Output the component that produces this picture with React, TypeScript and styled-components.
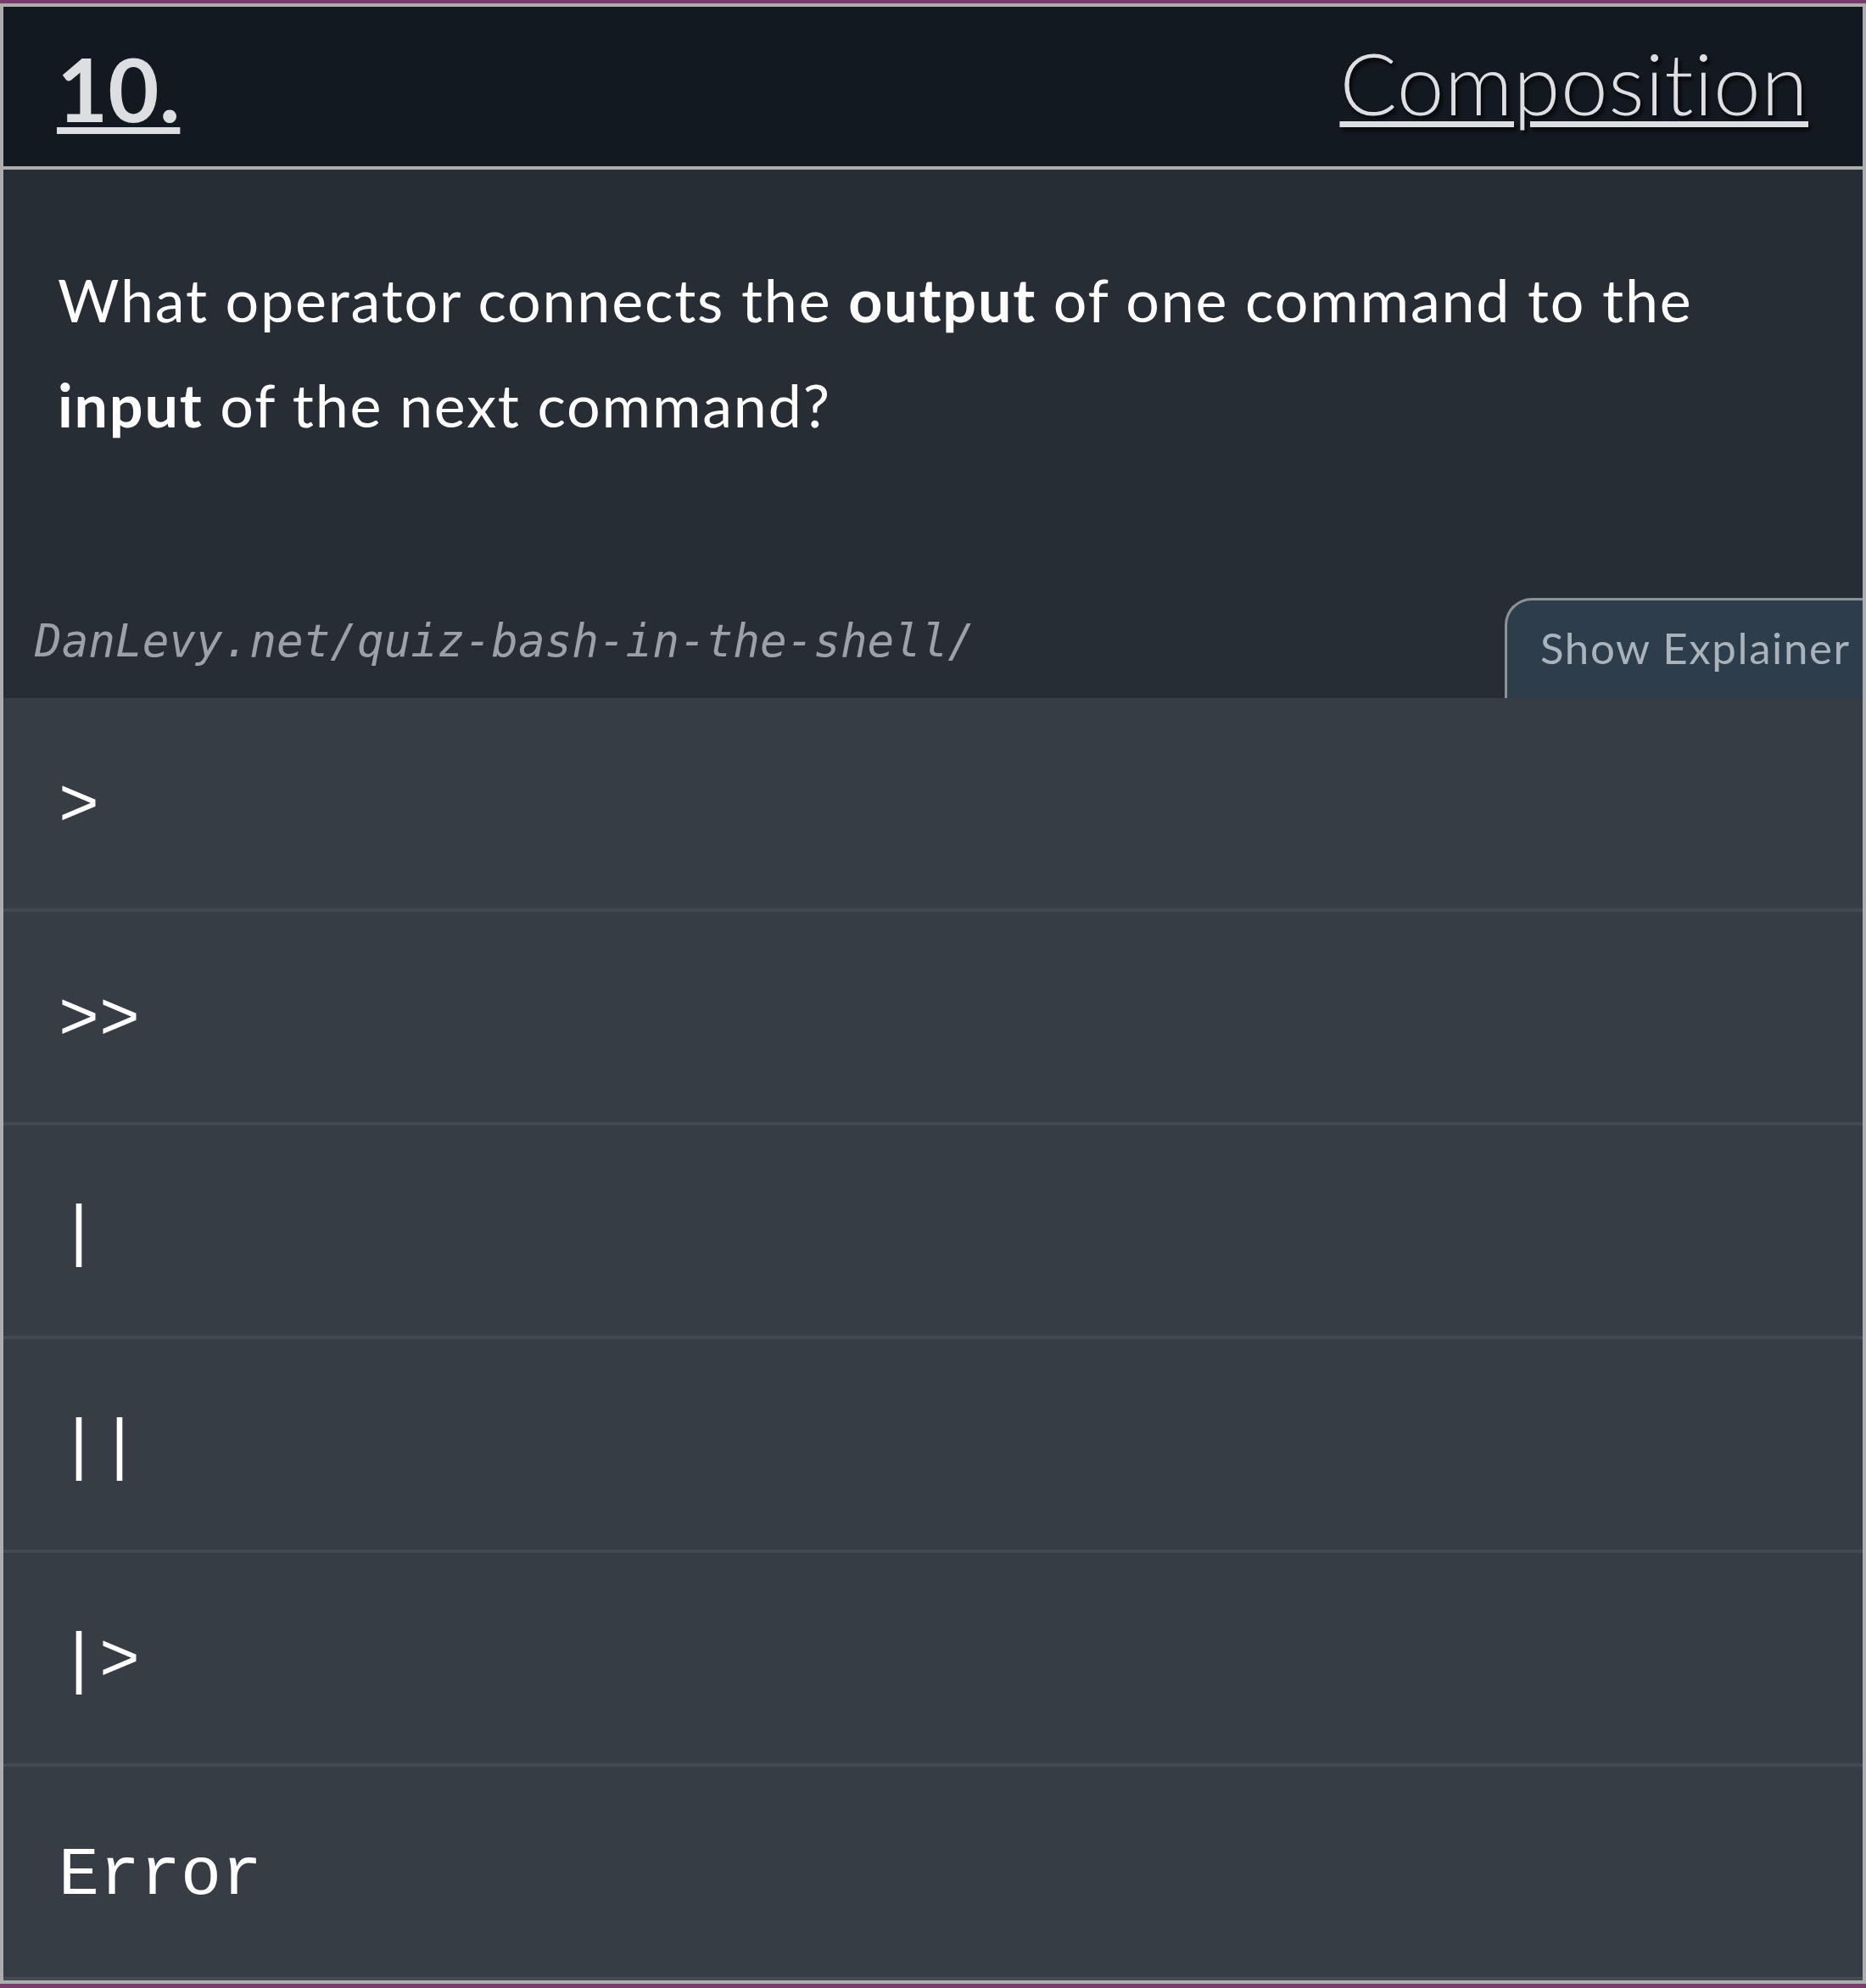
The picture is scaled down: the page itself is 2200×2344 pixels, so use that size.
import React from "react";
import styled, { createGlobalStyle } from "styled-components";

const GlobalStyle = createGlobalStyle`
  html, body {
    margin: 0;
    padding: 0;
    background: #773c6c;
  }
  * { box-sizing: border-box; }
`;

const Card = styled.div`
  margin: 4px 0;
  border: 4px solid #adadad;
  display: flex;
  flex-direction: column;
  font-family: "Lato", "Open Sans", sans-serif;
`;

const Header = styled.header`
  height: 192px;
  background: #131920;
  border-bottom: 4px solid #adadad;
  display: flex;
  align-items: center;
  justify-content: space-between;
  padding: 0 64px 0 63px;
`;

const Number = styled.a`
  color: #dcdee1;
  font-size: 104px;
  font-weight: 700;
  line-height: 1;
  text-decoration: underline;
  text-decoration-thickness: 8px;
  text-underline-offset: 6px;
  margin-top: 4px;
`;

const Category = styled.a`
  color: #dcdee1;
  font-size: 100px;
  font-weight: 300;
  letter-spacing: 0.6px;
  line-height: 1;
  text-decoration: underline;
  text-decoration-thickness: 7px;
  text-underline-offset: 7px;
  text-shadow: 3px 4px 4px rgba(0, 0, 0, 0.75);
  margin-top: -10px;
`;

const QuestionSection = styled.section`
  height: 623px;
  background: #272d34;
  display: flex;
  flex-direction: column;
  justify-content: space-between;
`;

const QuestionText = styled.p`
  margin: 0;
  padding: 91px 64px 0 64px;
  color: #ffffff;
  font-size: 70px;
  line-height: 124px;
  font-weight: 400;
  letter-spacing: 1.8px;
  b { font-weight: 700; }
`;

const FooterRow = styled.div`
  display: flex;
  align-items: flex-end;
  justify-content: space-between;
`;

const SourceLink = styled.span`
  font-family: "DejaVu Sans Mono", "Liberation Mono", monospace;
  font-style: italic;
  font-size: 52.6px;
  line-height: 60px;
  color: #9ca1a7;
  padding-left: 37px;
  margin-bottom: 37px;
`;

const ExplainerTab = styled.button`
  width: 422px;
  height: 118px;
  background: #2e3d4b;
  border: 3px solid #8d9297;
  border-right: none;
  border-bottom: none;
  border-top-left-radius: 32px;
  color: #aab2bb;
  font-family: "Lato", "Open Sans", sans-serif;
  font-size: 51px;
  letter-spacing: 1.6px;
  line-height: 50px;
  text-align: left;
  white-space: nowrap;
  overflow: hidden;
  padding: 31px 0 34px 39px;
  margin: 0;
  cursor: pointer;
`;

const Options = styled.ul`
  list-style: none;
  margin: 0;
  padding: 0;
`;

const Option = styled.li`
  height: 252px;
  background: #373d45;
  border-bottom: 4px solid #444a52;
  display: flex;
  align-items: center;
  padding: 8px 0 0 65px;
  font-family: "Liberation Mono", "Courier New", monospace;
  font-size: 80px;
  color: #ffffff;
  white-space: pre;
`;

const options = [">", ">>", "|", "||", "|>", "Error"];

export default function App() {
  return (
    <>
      <GlobalStyle />
      <Card>
        <Header>
          <Number>10.</Number>
          <Category>Composition</Category>
        </Header>
        <QuestionSection>
          <QuestionText>
            What operator connects the <b>output</b> of one command to the{" "}
            <b>input</b> of the next command?
          </QuestionText>
          <FooterRow>
            <SourceLink>DanLevy.net/quiz-bash-in-the-shell/</SourceLink>
            <ExplainerTab>Show Explainer</ExplainerTab>
          </FooterRow>
        </QuestionSection>
        <Options>
          {options.map((o) => (
            <Option key={o}>{o}</Option>
          ))}
        </Options>
      </Card>
    </>
  );
}
